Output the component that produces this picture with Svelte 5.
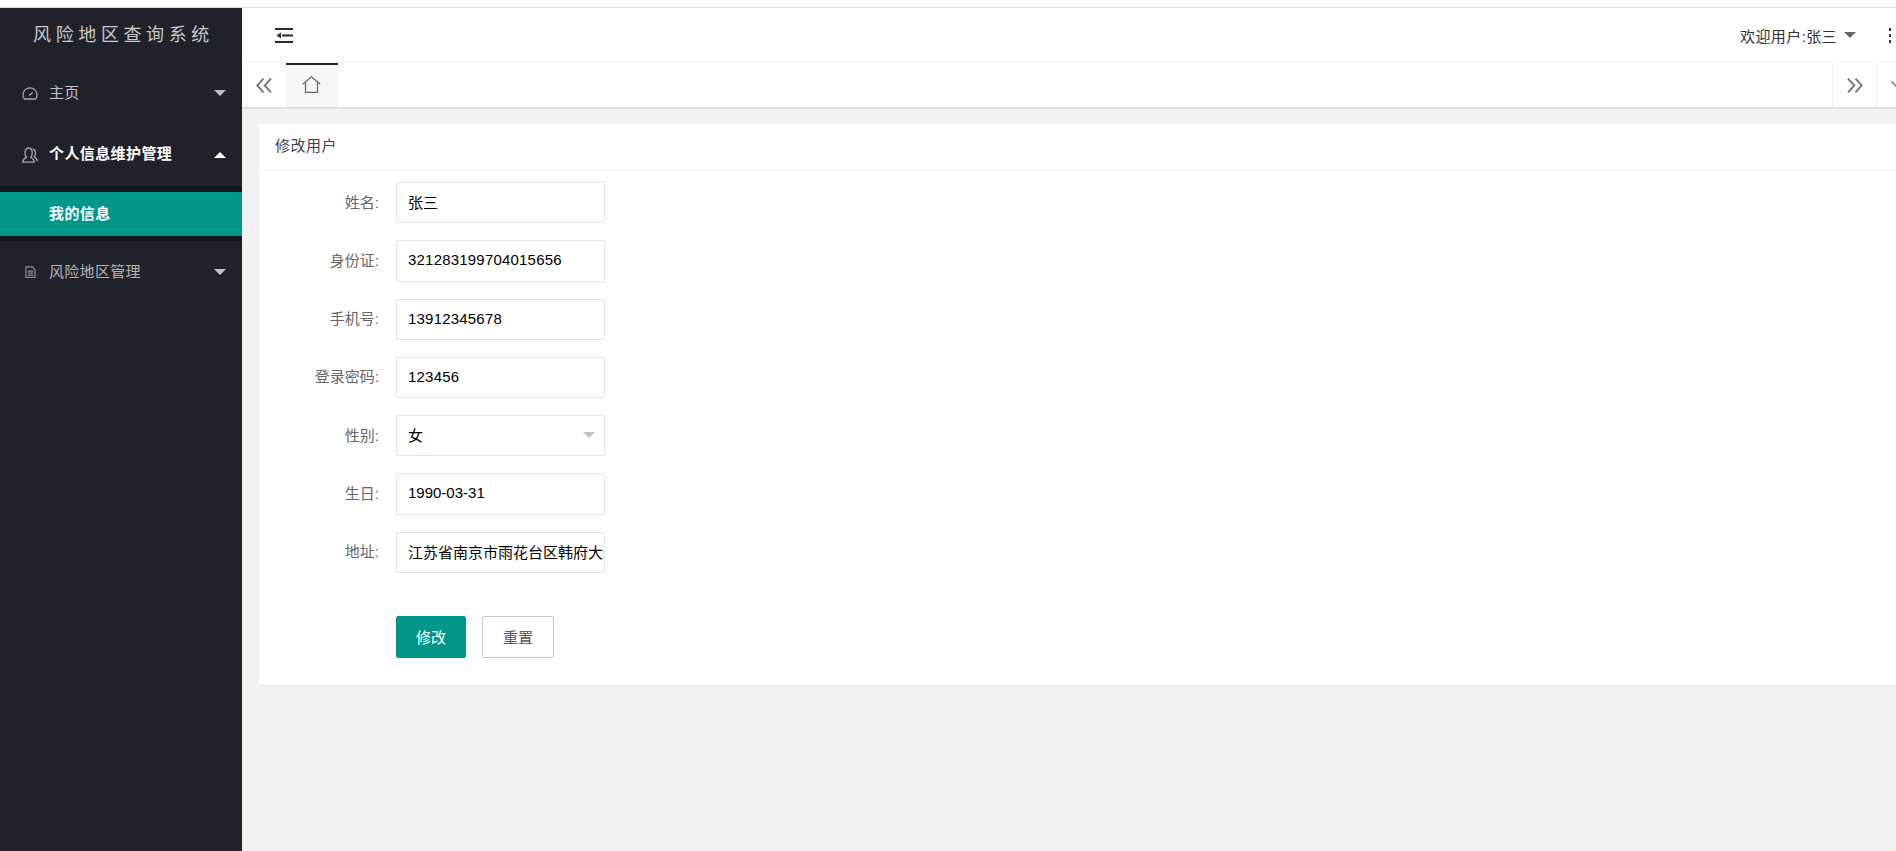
<script lang="ts">
	const fields = [
		{ label: "姓名:", value: "张三" },
		{ label: "身份证:", value: "321283199704015656", num: true },
		{ label: "手机号:", value: "13912345678", num: true },
		{ label: "登录密码:", value: "123456", num: true },
		{ label: "性别:", value: "女", select: true },
		{ label: "生日:", value: "1990-03-31" },
		{ label: "地址:", value: "江苏省南京市雨花台区韩府大道" },
	];
</script>

<div class="top-strip"></div>
<div class="page">
	<aside class="side">
		<div class="logo">风险地区查询系统</div>
		<div class="nav-item">
			<svg class="nav-icon" viewBox="0 0 16 16" fill="none" stroke="currentColor" stroke-width="1.3">
				<path d="M2.400 14h11.200a7 7 0 1 0-11.200 0z" />
				<path d="M7 10.600 10.800 7.400" />
			</svg>
			<span>主页</span>
			<i class="caret"></i>
		</div>
		<div class="nav-item open">
			<svg class="nav-icon" viewBox="0 0 16 16" fill="none" stroke="currentColor" stroke-width="1.3">
				<path d="M.8 15.200c0-3 1.700-3.800 3.700-4.800C3.400 9 3 7.800 3 6.200 3 3.200 4.300 1 6.600 1S10.200 3.200 10.200 6.200c0 1.600-.4 2.800-1.500 4.200 1.900 1 3.600 1.800 3.600 4.800z" />
				<path d="M10.800 1.800c1.800.5 2.700 2.300 2.700 4.400 0 1.400-.4 2.600-1.200 3.600 1.500.8 2.900 1.900 2.900 4.400" />
			</svg>
			<span>个人信息维护管理</span>
			<i class="caret up"></i>
		</div>
		<div class="subnav">
			<div class="sub-item">我的信息</div>
		</div>
		<div class="nav-item dim">
			<svg class="nav-icon small" viewBox="0 0 12 13" fill="none" stroke="currentColor" stroke-width="1.300">
				<path d="M1 1h7l3 3v8.300H1z" />
				<path d="M3 5.500h6M3 7.700h6M3 10h6" />
			</svg>
			<span>风险地区管理</span>
			<i class="caret"></i>
		</div>
	</aside>

	<main class="main">
		<header class="head">
			<svg class="fold" viewBox="0 0 18 15">
				<path d="M0 1h18M7 7.500h11M0 14h18" stroke="#2a2c33" stroke-width="2" />
				<path d="M1.500 7.500 6 4.500v6z" fill="#2a2c33" />
			</svg>
			<div class="head-right">
				<span class="welcome">欢迎用户:张三</span>
				<i class="caret dark"></i>
				<div class="dots"><b></b><b></b><b></b></div>
			</div>
		</header>

		<div class="tabs">
			<button class="tab-btn left" aria-label="prev">
				<svg viewBox="0 0 16 15" fill="none" stroke="#777" stroke-width="1.9">
					<path d="M7.500 .6 1.200 7.500l6.300 6.900M15 .6 8.700 7.500l6.300 6.900" />
				</svg>
			</button>
			<div class="tab active">
				<svg viewBox="0 0 19 17" fill="none" stroke="#666" stroke-width="1.2">
					<path d="M.8 8.300 9.500 .8l8.700 7.500M3.500 6.500v9.800h12V6.500" />
				</svg>
			</div>
			<div class="tab-fill"></div>
			<button class="tab-btn" aria-label="next">
				<svg viewBox="0 0 16 15" fill="none" stroke="#777" stroke-width="1.9">
					<path d="M1 .6 7.300 7.500 1 14.400M8.500 .6l6.300 6.900-6.300 6.900" />
				</svg>
			</button>
			<button class="tab-btn more" aria-label="more">
				<svg viewBox="0 0 14 8" fill="none" stroke="#777" stroke-width="1.500">
					<path d="M.5.5 7 7l6.500-6.500" />
				</svg>
			</button>
		</div>

		<div class="content">
			<section class="card">
				<div class="card-title">修改用户</div>
				<form class="form">
					{#each fields as f}
						<div class="row">
							<label class="label" for={f.label}>{f.label}</label>
							<div class="control">
								<input id={f.label} class:num={f.num} value={f.value} readonly />
								{#if f.select}<i class="caret light"></i>{/if}
							</div>
						</div>
					{/each}
					<div class="actions">
						<button type="button" class="btn primary">修改</button>
						<button type="button" class="btn">重置</button>
					</div>
				</form>
			</section>
		</div>
	</main>
</div>

<style>
	:global(body) {
		margin: 0;
		overflow: hidden;
		background: #fff;
		font-family: "Liberation Sans", "Noto Sans CJK SC", sans-serif;
		font-size: 15px;
	}

	.top-strip {
		height: 7px;
		border-bottom: 1px solid #ddd;
	}

	.page {
		display: flex;
		height: 843px;
		width: 1896px;
		overflow: hidden;
	}

	.side {
		flex: 0 0 242px;
		background: #20222a;
		color: #c2c2c2;
	}

	.logo {
		height: 54px;
		line-height: 54px;
		padding-left: 5px;
		text-align: center;
		font-size: 18px;
		letter-spacing: 4.600px;
		color: #c9c9c9;
	}

	.nav-item {
		height: 62px;
		display: flex;
		align-items: center;
		padding-left: 22px;
		position: relative;
		color: #c2c2c2;
		letter-spacing: 0.3px;
	}

	.nav-item span {
		margin-bottom: 3px;
	}

	.nav-item.open {
		color: #fff;
		font-weight: 700;
		letter-spacing: 0.4px;
	}

	.nav-item.open span {
		margin-bottom: 5px;
	}

	.nav-item.dim {
		color: #b5b5b5;
	}

	.nav-icon {
		width: 16px;
		height: 16px;
		margin-right: 11px;
		color: #a8a8a8;
		flex: none;
	}

	.nav-icon.small {
		width: 11px;
		height: 12px;
		margin-left: 3px;
		margin-right: 13px;
		color: #8c8c8c;
	}

	.caret {
		border-left: 6px solid transparent;
		border-right: 6px solid transparent;
		border-top: 6px solid #c2c2c2;
		width: 0;
		height: 0;
		display: block;
	}

	.nav-item .caret {
		position: absolute;
		right: 16px;
		top: 28px;
	}

	.caret.up {
		border-top: 0;
		border-bottom: 6px solid #fff;
	}

	.subnav {
		background: #15171c;
		padding: 6px 0 5px;
	}

	.sub-item {
		height: 44px;
		line-height: 44px;
		padding-left: 49px;
		background: #009688;
		color: #fff;
		font-weight: 700;
		letter-spacing: 0.4px;
	}

	.main {
		flex: 1;
		min-width: 0;
		display: flex;
		flex-direction: column;
	}

	.head {
		height: 54px;
		display: flex;
		align-items: center;
		justify-content: space-between;
		padding-left: 33px;
	}

	.fold {
		width: 18px;
		height: 15px;
		margin-top: 1px;
	}

	.head-right {
		display: flex;
		align-items: center;
		color: #333;
		letter-spacing: 0.4px;
	}

	.caret.dark {
		border-top-color: #666;
		margin-left: 7px;
	}

	.dots {
		display: flex;
		flex-direction: column;
		gap: 3px;
		margin-left: 33px;
		margin-right: 5px;
	}

	.dots b {
		width: 2px;
		height: 3px;
		background: #333;
	}

	.tabs {
		height: 45px;
		box-sizing: border-box;
		width: calc(100% + 24px);
		display: flex;
		border-top: 1px solid #f6f6f6;
		box-shadow: 0 1px 2px rgba(0, 0, 0, 0.16);
		position: relative;
	}

	.tab-btn {
		width: 44px;
		flex: none;
		padding: 0;
		border: 0;
		border-left: 1px solid #f2f2f2;
		background: #fff;
		display: flex;
		align-items: center;
		justify-content: center;
	}

	.tab-btn.left {
		border-left: 0;
	}

	.tab-btn svg {
		width: 16px;
		height: 15px;
	}

	.tab-btn.more {
		justify-content: flex-start;
		padding-left: 14px;
	}

	.tab-btn.more svg {
		width: 14px;
		height: 8px;
		flex: none;
	}

	.tab {
		width: 52px;
		box-sizing: border-box;
		background: #f6f6f6;
		border-top: 2px solid #20222a;
		padding: 0 2px 3px 0;
		display: flex;
		align-items: center;
		justify-content: center;
	}

	.tab svg {
		width: 19px;
		height: 17px;
	}

	.tab-fill {
		flex: 1;
	}

	.content {
		flex: 1;
		background: #f2f2f2;
		padding: 17px 0 0 17px;
	}

	.card {
		background: #fff;
		border-radius: 2px;
		box-shadow: 0 1px 2px rgba(0, 0, 0, 0.05);
		height: 561px;
		margin-right: -6px;
	}

	.card-title {
		height: 47px;
		line-height: 44px;
		box-sizing: border-box;
		padding-left: 16px;
		border-bottom: 1px solid #f6f6f6;
		color: #444;
		letter-spacing: 0.5px;
	}

	.form {
		padding-top: 11px;
	}

	.row {
		display: flex;
		align-items: center;
		height: 41.25px;
		margin-bottom: 17px;
	}

	.label {
		width: 120px;
		text-align: right;
		color: #666;
		margin: 0 17px 3px 0;
	}

	.control {
		position: relative;
		width: 209px;
		height: 100%;
	}

	input {
		display: block;
		box-sizing: border-box;
		width: 100%;
		height: 100%;
		border: 1px solid #e6e6e6;
		border-radius: 2px;
		padding: 0 0 2px 11px;
		font: inherit;
		color: #000;
		outline: none;
		background: #fff;
	}

	input.num {
		letter-spacing: 0.2px;
	}

	.caret.light {
		position: absolute;
		right: 10px;
		top: 17px;
		border-top-color: #c2c2c2;
	}

	.actions {
		display: flex;
		gap: 16px;
		padding: 26px 0 0 137px;
	}

	.btn {
		width: 72px;
		height: 42px;
		box-sizing: border-box;
		border: 1px solid #c9c9c9;
		border-radius: 2px;
		background: #fff;
		color: #555;
		font: inherit;
		padding: 0;
	}

	.btn.primary {
		width: 70px;
		background: #009688;
		border-color: #009688;
		color: #fff;
	}
</style>
